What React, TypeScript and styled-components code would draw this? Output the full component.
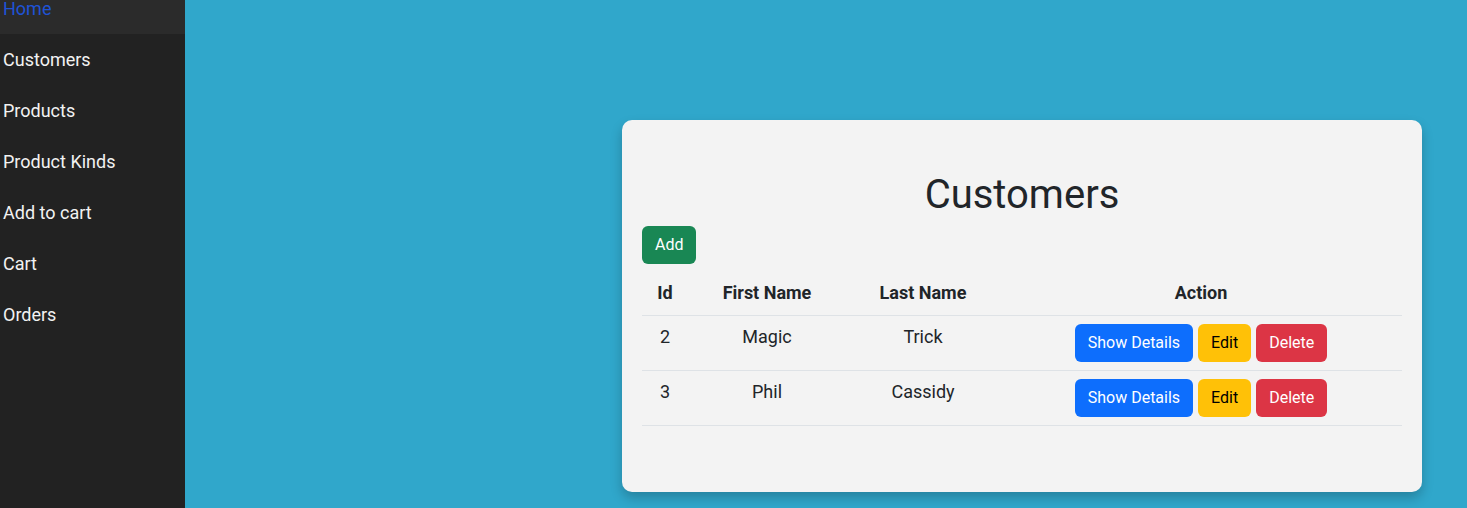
import React from "react";
import styled, { createGlobalStyle } from "styled-components";

const Global = createGlobalStyle`
  html, body { margin: 0; padding: 0; }
  body {
    font-family: Roboto, "Liberation Sans", Arial, sans-serif;
    background: #30a7cb;
    color: #212529;
    overflow: hidden;
  }
  * { box-sizing: border-box; }
`;

const Layout = styled.div`
  display: flex;
  width: 1467px;
  height: 508px;
  overflow: hidden;
`;

const Sidebar = styled.nav`
  width: 185px;
  flex: none;
  background: #222222;
  display: flex;
  flex-direction: column;
  margin-top: -17px;
  height: 525px;
`;

const NavItem = styled.a<{ $active?: boolean }>`
  display: block;
  padding: 15px 3px;
  font-size: 18px;
  line-height: 21px;
  text-decoration: none;
  color: ${(p) => (p.$active ? "#1f53d6" : "#f2f2f2")};
  background: ${(p) => (p.$active ? "#2b2b2b" : "transparent")};
`;

const Main = styled.main`
  flex: 1;
  padding: 120px 45px 0 0;
  display: flex;
  justify-content: flex-end;
  align-items: flex-start;
`;

const Card = styled.section`
  width: 800px;
  height: 372px;
  background: #f3f3f3;
  border-radius: 10px;
  box-shadow: 0 6px 12px rgba(0, 0, 0, 0.22);
  padding: 51px 20px 20px;
`;

const Title = styled.h1`
  margin: 0 0 7px;
  font-size: 40px;
  font-weight: 400;
  line-height: 48px;
  text-align: center;
  color: #212529;
`;

const Btn = styled.button<{ $variant: "success" | "primary" | "warning" | "danger" }>`
  display: inline-block;
  font-family: Roboto, "Liberation Sans", Arial, sans-serif;
  font-size: 16px;
  line-height: 24px;
  padding: 6px 12px;
  border-radius: 6px;
  border: 1px solid transparent;
  cursor: pointer;
  background: ${(p) =>
    ({ success: "#198754", primary: "#0d6efd", warning: "#ffc107", danger: "#dc3545" }[p.$variant])};
  color: ${(p) => (p.$variant === "warning" ? "#000" : "#fff")};
`;

const Table = styled.table`
  width: 100%;
  border-collapse: collapse;
  margin-top: 8px;
  font-size: 18px;
  line-height: 27px;
  color: #212529;
`;

const Th = styled.th<{ $w?: number }>`
  padding: 7px 8px 9px;
  font-weight: 700;
  text-align: center;
  border-bottom: 1px solid #dee2e6;
  width: ${(p) => (p.$w ? `${p.$w}px` : "auto")};
`;

const Td = styled.td`
  padding: 8px;
  line-height: 25px;
  text-align: center;
  vertical-align: top;
  border-bottom: 1px solid #dee2e6;
`;

const Actions = styled.div`
  display: flex;
  justify-content: center;
  gap: 5px;
`;

const customers = [
  { id: 2, first: "Magic", last: "Trick" },
  { id: 3, first: "Phil", last: "Cassidy" },
];

const nav = ["Home", "Customers", "Products", "Product Kinds", "Add to cart", "Cart", "Orders"];

export default function App() {
  return (
    <>
      <Global />
      <Layout>
        <Sidebar>
          {nav.map((n, i) => (
            <NavItem key={n} href="#" $active={i === 0}>
              {n}
            </NavItem>
          ))}
        </Sidebar>
        <Main>
          <Card>
            <Title>Customers</Title>
            <Btn $variant="success">Add</Btn>
            <Table>
              <thead>
                <tr>
                  <Th $w={46}>Id</Th>
                  <Th $w={158}>First Name</Th>
                  <Th $w={154}>Last Name</Th>
                  <Th>Action</Th>
                </tr>
              </thead>
              <tbody>
                {customers.map((c) => (
                  <tr key={c.id}>
                    <Td>{c.id}</Td>
                    <Td>{c.first}</Td>
                    <Td>{c.last}</Td>
                    <Td>
                      <Actions>
                        <Btn $variant="primary">Show Details</Btn>
                        <Btn $variant="warning">Edit</Btn>
                        <Btn $variant="danger">Delete</Btn>
                      </Actions>
                    </Td>
                  </tr>
                ))}
              </tbody>
            </Table>
          </Card>
        </Main>
      </Layout>
    </>
  );
}
